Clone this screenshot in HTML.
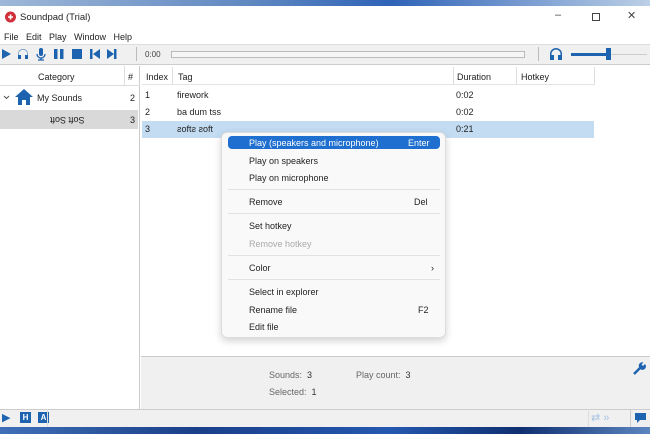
<!DOCTYPE html><html><head><style>
*{margin:0;padding:0;box-sizing:border-box}
body{width:650px;height:434px;overflow:hidden;font-family:"Liberation Sans",sans-serif;font-size:9px;color:#222;background:#fff;position:relative}
.a{position:absolute}
</style></head><body>
<div class="a" style="left:0;top:0;width:650px;height:6px;background:linear-gradient(90deg,#9fb8d8,#5d86c0 40%,#2f63b8 60%,#bcd0e6)"></div>
<div class="a" style="left:0;top:427px;width:650px;height:7px;background:linear-gradient(90deg,#3f6fb8,#1a3f8a 30%,#2458b0 60%,#0f2f70 80%,#5c86c0)"></div>
<!-- title -->
<svg class="a" style="left:4px;top:11px" width="13" height="12" viewBox="0 0 13 12"><circle cx="6.5" cy="6" r="5.5" fill="#d0303a"/><path d="M4 6h5M6.5 3.5v5" stroke="#fff" stroke-width="1.6"/></svg>
<div class="a" style="left:20px;top:12px;font-size:9.5px">Soundpad (Trial)</div>
<div class="a" style="left:555px;top:9px;font-size:11px;color:#444">–</div>
<div class="a" style="left:592px;top:13px;width:8px;height:8px;border:1px solid #444"></div>
<div class="a" style="left:627px;top:9px;font-size:11px;color:#444">✕</div>
<div class="a" style="left:4px;top:32px;font-size:9px">File&nbsp;&nbsp; Edit&nbsp;&nbsp; Play&nbsp;&nbsp; Window&nbsp;&nbsp; Help</div>
<!-- toolbar -->
<div class="a" style="left:0;top:44px;width:650px;height:21px;background:#f0f0f0;border-top:1px solid #ddd;border-bottom:1px solid #ccc"></div>
<svg class="a" style="left:0;top:47px" width="125" height="14" viewBox="0 0 125 14" fill="#1e63b0">
<path d="M2 2l9 5-9 5z"/>
<path d="M18 12V7a5 5 0 0110 0v5h-3V8h2.5V7a4.5 4.5 0 00-9 0v1H21v4z"/>
<rect x="39" y="1" width="4" height="8" rx="2"/><path d="M37 7a4 4 0 008 0M41 11v2M38 13h6" stroke="#1e63b0" stroke-width="1.3" fill="none"/>
<rect x="54" y="2" width="3.5" height="10"/><rect x="60" y="2" width="3.5" height="10"/>
<rect x="72" y="2" width="10" height="10"/>
<rect x="90" y="2" width="2.5" height="10"/><path d="M100 2v10l-7-5z"/>
<path d="M107 2v10l7-5z"/><rect x="114" y="2" width="2.5" height="10"/>
</svg>
<div class="a" style="left:136px;top:47px;width:1px;height:14px;background:#bbb"></div>
<div class="a" style="left:145px;top:50px;font-size:8px;color:#444">0:00</div>
<div class="a" style="left:171px;top:51px;width:354px;height:7px;border:1px solid #bbb;background:#f6f6f6"></div>
<div class="a" style="left:538px;top:47px;width:1px;height:14px;background:#bbb"></div>
<svg class="a" style="left:549px;top:47px" width="14" height="14" viewBox="0 0 14 14" fill="#1e63b0"><path d="M1 13V7a6 6 0 0112 0v6h-4V8h2.5V7a4.5 4.5 0 00-9 0v1H5v5z"/></svg>
<div class="a" style="left:571px;top:53px;width:40px;height:3px;background:#1e63b0"></div>
<div class="a" style="left:606px;top:48px;width:5px;height:12px;background:#1e63b0"></div>
<div class="a" style="left:611px;top:54px;width:36px;height:1px;background:#ccc"></div>
<!-- left pane -->
<div class="a" style="left:0;top:66px;width:140px;height:343px;border-right:1px solid #ccc"></div>
<div class="a" style="left:0;top:66px;width:140px;height:20px;border-bottom:1px solid #ddd"></div>
<div class="a" style="left:38px;top:72px">Category</div>
<div class="a" style="left:124px;top:66px;width:1px;height:20px;background:#ddd"></div>
<div class="a" style="left:128px;top:72px">#</div>
<svg class="a" style="left:3px;top:95px" width="7" height="5"><path d="M1 1l2.5 2.5L6 1" stroke="#555" fill="none"/></svg>
<svg class="a" style="left:14px;top:88px" width="20" height="18" viewBox="0 0 20 18" fill="#1e63b0"><path d="M10 1L1 9h3v8h4v-5h4v5h4V9h3z"/></svg>
<div class="a" style="left:37px;top:93px">My Sounds</div>
<div class="a" style="left:130px;top:93px">2</div>
<div class="a" style="left:0;top:110px;width:138px;height:19px;background:#d9d9d9"></div>
<div class="a" style="left:50px;top:115px;transform:scaleY(-1) scaleX(-1)">Soft Soft</div>
<div class="a" style="left:130px;top:115px">3</div>
<!-- list -->
<div class="a" style="left:142px;top:67px;width:452px;height:18px;border-bottom:1px solid #e4e4e4"></div>
<div class="a" style="left:146px;top:72px">Index</div>
<div class="a" style="left:172px;top:67px;width:1px;height:18px;background:#ddd"></div>
<div class="a" style="left:178px;top:72px">Tag</div>
<div class="a" style="left:453px;top:67px;width:1px;height:18px;background:#ddd"></div>
<div class="a" style="left:457px;top:72px">Duration</div>
<div class="a" style="left:516px;top:67px;width:1px;height:18px;background:#ddd"></div>
<div class="a" style="left:521px;top:72px">Hotkey</div>
<div class="a" style="left:594px;top:67px;width:1px;height:18px;background:#ddd"></div>
<div class="a" style="left:145px;top:90px">1</div><div class="a" style="left:177px;top:90px">firework</div><div class="a" style="left:456px;top:90px">0:02</div>
<div class="a" style="left:145px;top:107px">2</div><div class="a" style="left:177px;top:107px">ba dum tss</div><div class="a" style="left:456px;top:107px">0:02</div>
<div class="a" style="left:142px;top:121px;width:452px;height:17px;background:#c4dcf2"></div>
<div class="a" style="left:145px;top:124px">3</div><div class="a" style="left:177px;top:124px">ƨoftƨ ƨoft</div><div class="a" style="left:456px;top:124px">0:21</div>
<!-- status -->
<div class="a" style="left:141px;top:356px;width:509px;height:53px;background:#f0f0f0;border-top:1px solid #ccc"></div>
<div class="a" style="left:269px;top:370px;color:#666">Sounds:&nbsp; <span style="color:#333">3</span></div>
<div class="a" style="left:356px;top:370px;color:#666">Play count:&nbsp; <span style="color:#333">3</span></div>
<div class="a" style="left:269px;top:387px;color:#666">Selected:&nbsp; <span style="color:#333">1</span></div>
<svg class="a" style="left:632px;top:362px" width="14" height="14" viewBox="0 0 14 14"><path d="M2 12l6-6" stroke="#1e63b0" stroke-width="2.5"/><path d="M7 5a3.5 3.5 0 106-3l-2 2-1.5-1.5 2-2A3.5 3.5 0 007 5z" fill="#1e63b0"/></svg>
<!-- bottom bar -->
<div class="a" style="left:0;top:409px;width:650px;height:18px;background:#f0f0f0;border-top:1px solid #ccc"></div>
<div class="a" style="left:2px;top:411px;color:#1e63b0;font-size:11px">▶</div>
<div class="a" style="left:20px;top:412px;width:11px;height:11px;background:#1e63b0;color:#fff;font-size:8px;text-align:center;line-height:11px;font-weight:bold">H</div>
<div class="a" style="left:38px;top:412px;width:11px;height:11px;background:#1e63b0;color:#fff;font-size:8px;text-align:center;line-height:11px;font-weight:bold">A</div>
<div class="a" style="left:47px;top:409px;width:1px;height:18px;background:#ddd"></div>
<div class="a" style="left:588px;top:409px;width:1px;height:18px;background:#ddd"></div>
<div class="a" style="left:591px;top:411px;color:#a8c4e4;font-size:11px">⇄ »</div>
<div class="a" style="left:630px;top:410px;width:1px;height:17px;background:#ccc"></div>
<svg class="a" style="left:634px;top:412px" width="13" height="13" viewBox="0 0 13 13" fill="#1e63b0"><path d="M1 1h11v7H6l-3 3V8H1z"/></svg>
<!-- context menu -->
<div class="a" style="left:221px;top:132px;width:225px;height:206px;background:#f9f9f9;border:1px solid #ddd;border-radius:6px;box-shadow:0 3px 8px rgba(0,0,0,.18)"></div>
<div class="a" style="left:228px;top:136px;width:212px;height:13px;background:#1e6fcf;border-radius:4px"></div>
<div class="a" style="left:249px;top:138px;color:#fff">Play (speakers and microphone)</div>
<div class="a" style="left:408px;top:138px;color:#fff">Enter</div>
<div class="a" style="left:249px;top:156px">Play on speakers</div>
<div class="a" style="left:249px;top:173px">Play on microphone</div>
<div class="a" style="left:228px;top:189px;width:212px;height:1px;background:#e2e2e2"></div>
<div class="a" style="left:249px;top:197px">Remove</div><div class="a" style="left:414px;top:197px">Del</div>
<div class="a" style="left:228px;top:213px;width:212px;height:1px;background:#e2e2e2"></div>
<div class="a" style="left:249px;top:221px">Set hotkey</div>
<div class="a" style="left:249px;top:239px;color:#aaa">Remove hotkey</div>
<div class="a" style="left:228px;top:255px;width:212px;height:1px;background:#e2e2e2"></div>
<div class="a" style="left:249px;top:263px">Color</div><div class="a" style="left:431px;top:263px">›</div>
<div class="a" style="left:228px;top:279px;width:212px;height:1px;background:#e2e2e2"></div>
<div class="a" style="left:249px;top:287px">Select in explorer</div>
<div class="a" style="left:249px;top:305px">Rename file</div><div class="a" style="left:418px;top:305px">F2</div>
<div class="a" style="left:249px;top:322px">Edit file</div>
</body></html>
